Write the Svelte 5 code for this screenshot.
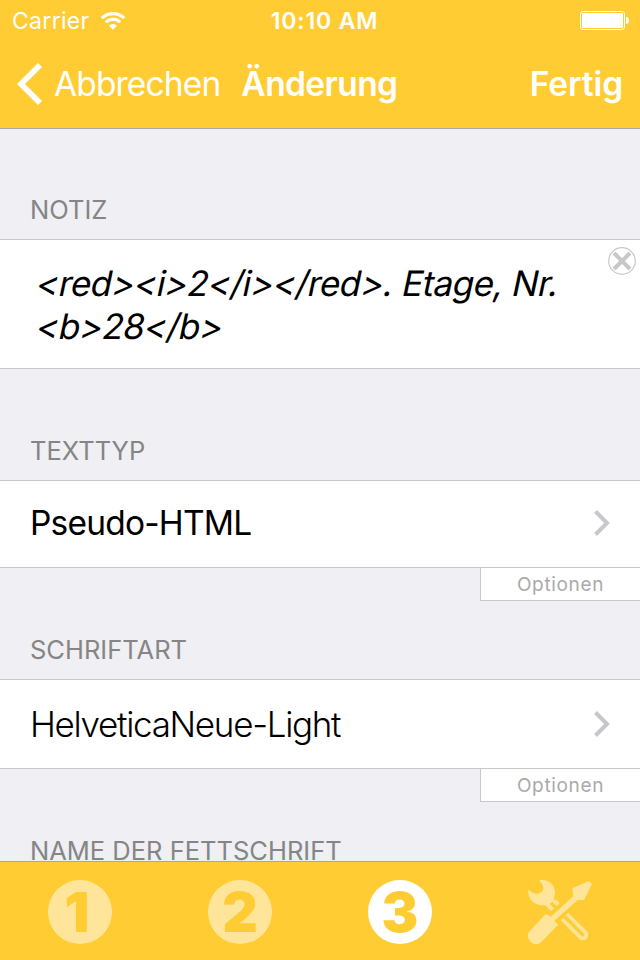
<script lang="ts">
	let note = '<red><i>2</i></red>. Etage, Nr.\n<b>28</b>';
	let activeTab = 3;

	const rows = [
		{ title: 'Texttyp', value: 'Pseudo-HTML', kind: 'type' },
		{ title: 'Schriftart', value: 'HelveticaNeue-Light', kind: 'font' }
	];
	const tabs = [1, 2, 3];

	function clearNote() {
		note = '';
	}
</script>

<div class="screen">
	<header>
		<div class="status">
			<div class="carrier">
				<span>Carrier</span>
				<svg width="26" height="20" viewBox="0 0 26 20" fill="none" stroke="#fff">
					<path d="M1.8 7.2a15.8 15.8 0 0 1 22.4 0" stroke-width="3.2" />
					<path d="M5.8 11.2a10.2 10.2 0 0 1 14.4 0" stroke-width="3" />
					<path d="M8.9 14.7a5.8 5.8 0 0 1 8.2 0L13 18.8z" fill="#fff" stroke="none" />
				</svg>
			</div>
			<span class="time">10:10 AM</span>
			<svg class="battery" width="50" height="20" viewBox="0 0 50 20">
				<rect x="0.5" y="0.5" width="44" height="18" rx="2.5" fill="none" stroke="#fff" />
				<rect x="2" y="2" width="41" height="15" rx="1" fill="#fff" />
				<path d="M46 6c2 0 3 1.5 3 3.5s-1 3.5-3 3.5z" fill="#fff" />
			</svg>
		</div>
		<nav>
			<button class="back">
				<svg width="25" height="42" viewBox="0 0 25 42" fill="#fff">
					<path d="M0 21 21 0l4 4L8 21l17 17-4 4z" />
				</svg>
				<span>Abbrechen</span>
			</button>
			<h1>Änderung</h1>
			<button class="done">Fertig</button>
		</nav>
	</header>

	<main>
		<h2 class="first">Notiz</h2>
		<div class="note">
			{#each note.split('\n') as line}
				<p>{line}</p>
			{/each}
			<button class="clear" on:click={clearNote} aria-label="Löschen">
				<svg width="28" height="28" viewBox="0 0 28 28" fill="none" stroke="#c8c8c8">
					<circle cx="14" cy="14" r="13.3" stroke-width="1.2" />
					<path d="M6 6l16 16M22 6 6 22" stroke-width="4" />
				</svg>
			</button>
		</div>

		{#each rows as row, i}
			<h2 class:second={i === 0}>{row.title}</h2>
			<div class="row {row.kind}">
				<span>{row.value}</span>
				<svg width="16" height="26" viewBox="0 0 16 26" fill="none" stroke="#c7c7cc">
					<path d="M1.5 1.5 13 13 1.5 24.5" stroke-width="4" />
				</svg>
			</div>
			<button class="options">Optionen</button>
		{/each}
		<h2>Name der Fettschrift</h2>
	</main>

	<footer>
		{#each tabs as tab}
			<button class="tab" class:active={tab === activeTab} on:click={() => (activeTab = tab)}>
				<svg width="64" height="64" viewBox="0 0 64 64">
					<circle cx="32" cy="32" r="32" fill="#fff" />
				</svg>
				<span class="digit" class:one={tab === 1}>{tab}</span>
			</button>
		{/each}
		<button class="tab" aria-label="Werkzeuge">
			<svg width="64" height="64" viewBox="54 45 192 192" fill="#fff">
				<path d="M88 46c24-5 47 12 47 36 0 9-2 15-4 20l4 4 5-1 9 9-9 9-13-13-8 7 13 13-8 9-19-19c-27 5-51-15-51-43l3-2c12 11 24 14 34 8 11-6 13-20 0-31z" />
				<path d="M107 148 61 196a24 24 0 0 0 34 34l42-43 8-7-12-13 70-62h19l24-49-9-8-50 22 3 23-69 64-5-7z" />
				<path d="M171 147l55 55a10.5 10.5 0 0 1-15 15L156 162" fill="none" stroke="#fff" stroke-width="11" />
			</svg>
		</button>
	</footer>
</div>

<style>
	:global(body) {
		margin: 0;
	}

	.screen {
		display: flex;
		flex-direction: column;
		width: 640px;
		height: 960px;
		overflow: hidden;
		background: #efeff4;
		font-family: Inter, 'Liberation Sans', sans-serif;
	}

	button {
		padding: 0;
		border: none;
		background: none;
		color: inherit;
		font: inherit;
		cursor: pointer;
	}

	svg {
		display: block;
		flex-shrink: 0;
	}

	header {
		box-sizing: border-box;
		height: 129px;
		flex-shrink: 0;
		background: #fc3;
		border-bottom: 1px solid #a7a7aa;
		color: #fff;
	}

	.status {
		display: grid;
		grid-template-columns: 1fr auto 1fr;
		align-items: center;
		height: 40px;
		padding: 0 10px 0 12px;
		font-size: 23px;
		line-height: 42px;
	}

	.carrier {
		display: flex;
		align-items: center;
		gap: 10px;
		letter-spacing: 0.3px;
	}

	.time {
		padding-left: 7px;
		font-weight: 600;
		letter-spacing: 0.85px;
	}

	.battery {
		justify-self: end;
	}

	nav {
		display: flex;
		align-items: center;
		height: 88px;
		padding: 0 17px;
		font-size: 33.5px;
	}

	.back {
		display: flex;
		align-items: center;
		gap: 12px;
		letter-spacing: -0.85px;
	}

	h1 {
		margin: 0 0 0 21px;
		font-size: inherit;
		font-weight: 600;
		letter-spacing: -0.6px;
	}

	.done {
		margin-left: auto;
		font-weight: 600;
		letter-spacing: -0.1px;
	}

	main {
		flex: 1;
		min-height: 0;
		overflow: hidden;
	}

	h2 {
		display: flex;
		box-sizing: border-box;
		align-items: flex-end;
		height: 78px;
		margin: 0;
		padding: 0 30px 14px;
		color: #858585;
		font-size: 25.5px;
		font-weight: 400;
		line-height: 30px;
		text-transform: uppercase;
	}

	h2.first {
		height: 110px;
	}

	h2.second {
		height: 111px;
	}

	.note {
		position: relative;
		box-sizing: border-box;
		height: 130px;
		padding: 22px 60px 0 37px;
		background: #fff;
		border: solid #c8c7cc;
		border-width: 1px 0;
	}

	/* slanted upright face, keeps the two-storey a */
	.note p {
		margin: 0;
		font-size: 35px;
		letter-spacing: -0.56px;
		line-height: 43px;
		transform: skewX(-12deg);
	}

	.clear {
		position: absolute;
		top: 7px;
		right: 4px;
	}

	.row {
		display: flex;
		box-sizing: border-box;
		align-items: center;
		justify-content: space-between;
		height: 88px;
		padding: 0 30px 2px;
		background: #fff;
		border: solid #c8c7cc;
		border-width: 1px 0;
		font-size: 33.5px;
		letter-spacing: -0.8px;
	}

	.row.font {
		height: 90px;
		padding-bottom: 0;
		font-size: 35px;
		font-weight: 300;
		letter-spacing: -1.3px;
	}

	.options {
		display: block;
		box-sizing: border-box;
		width: 160px;
		height: 33px;
		margin-left: auto;
		background: #fff;
		border: solid #c8c7cc;
		border-width: 0 0 1px 1px;
		color: #aaa;
		font-size: 19px;
		letter-spacing: 0.65px;
	}

	footer {
		display: grid;
		grid-template-columns: repeat(4, 1fr);
		box-sizing: border-box;
		height: 99px;
		flex-shrink: 0;
		padding-top: 18px;
		background: #fc3;
		border-top: 1px solid #a7a7aa;
	}

	.tab {
		display: grid;
		justify-content: center;
		align-content: start;
		opacity: 0.5;
	}

	.tab.active {
		opacity: 1;
	}

	.tab > * {
		grid-area: 1 / 1;
	}

	.digit {
		color: #fc3;
		font-size: 55px;
		font-weight: 900;
		line-height: 64px;
	}

	.digit.one {
		padding-right: 6px;
	}
</style>
